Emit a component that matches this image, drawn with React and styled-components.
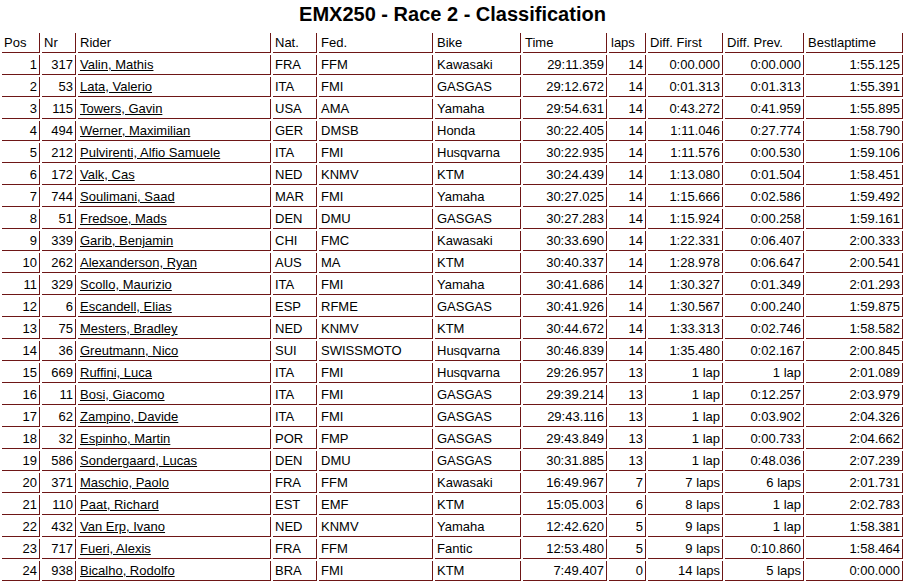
import React from 'react';
import styled, {createGlobalStyle} from 'styled-components';

const GlobalStyle = createGlobalStyle `
  body {
    margin: 0;
    background: #fff;
    font-family: "Liberation Sans", Arial, sans-serif;
    color: #000;
    overflow: hidden;
  }
`;

const Page = styled.div `
  width: 905px;
`;

const Title = styled.h1 `
  margin: 0;
  height: 31px;
  line-height: 29px;
  font-size: 20px;
  font-weight: bold;
  text-align: center;
`;

const Table = styled.table `
  width: 905px;
  table-layout: fixed;
  border-collapse: separate;
  border-spacing: 2px;
  font-size: 13px;
`;

const HeadCell = styled.th `
  height: 19px;
  padding: 0 2px;
  font-weight: normal;
  text-align: left;
  white-space: nowrap;
  border-right: 1px solid #6e1616;
  border-bottom: 1px solid #6e1616;
`;

const Cell = styled.td `
  height: 19px;
  padding: 0 2px;
  text-align: ${props => props.$right ? 'right' : 'left'};
  white-space: nowrap;
  overflow: hidden;
  border-right: 1px solid #6e1616;
  border-bottom: 1px solid #6e1616;
`;

const RiderLink = styled.a `
  color: #000;
  text-decoration: underline;
`;

const columns = [
  {label: 'Pos', width: 38, right: true},
  {label: 'Nr', width: 34, right: true},
  {label: 'Rider', width: 193},
  {label: 'Nat.', width: 44},
  {label: 'Fed.', width: 114},
  {label: 'Bike', width: 86},
  {label: 'Time', width: 84, right: true},
  {label: 'laps', width: 37, right: true},
  {label: 'Diff. First', width: 75, right: true},
  {label: 'Diff. Prev.', width: 79, right: true},
  {label: 'Bestlaptime', width: 97, right: true}
];

const rows = [
  ['1', '317', 'Valin, Mathis', 'FRA', 'FFM', 'Kawasaki', '29:11.359', '14', '0:00.000', '0:00.000', '1:55.125'],
  ['2', '53', 'Lata, Valerio', 'ITA', 'FMI', 'GASGAS', '29:12.672', '14', '0:01.313', '0:01.313', '1:55.391'],
  ['3', '115', 'Towers, Gavin', 'USA', 'AMA', 'Yamaha', '29:54.631', '14', '0:43.272', '0:41.959', '1:55.895'],
  ['4', '494', 'Werner, Maximilian', 'GER', 'DMSB', 'Honda', '30:22.405', '14', '1:11.046', '0:27.774', '1:58.790'],
  ['5', '212', 'Pulvirenti, Alfio Samuele', 'ITA', 'FMI', 'Husqvarna', '30:22.935', '14', '1:11.576', '0:00.530', '1:59.106'],
  ['6', '172', 'Valk, Cas', 'NED', 'KNMV', 'KTM', '30:24.439', '14', '1:13.080', '0:01.504', '1:58.451'],
  ['7', '744', 'Soulimani, Saad', 'MAR', 'FMI', 'Yamaha', '30:27.025', '14', '1:15.666', '0:02.586', '1:59.492'],
  ['8', '51', 'Fredsoe, Mads', 'DEN', 'DMU', 'GASGAS', '30:27.283', '14', '1:15.924', '0:00.258', '1:59.161'],
  ['9', '339', 'Garib, Benjamin', 'CHI', 'FMC', 'Kawasaki', '30:33.690', '14', '1:22.331', '0:06.407', '2:00.333'],
  ['10', '262', 'Alexanderson, Ryan', 'AUS', 'MA', 'KTM', '30:40.337', '14', '1:28.978', '0:06.647', '2:00.541'],
  ['11', '329', 'Scollo, Maurizio', 'ITA', 'FMI', 'Yamaha', '30:41.686', '14', '1:30.327', '0:01.349', '2:01.293'],
  ['12', '6', 'Escandell, Elias', 'ESP', 'RFME', 'GASGAS', '30:41.926', '14', '1:30.567', '0:00.240', '1:59.875'],
  ['13', '75', 'Mesters, Bradley', 'NED', 'KNMV', 'KTM', '30:44.672', '14', '1:33.313', '0:02.746', '1:58.582'],
  ['14', '36', 'Greutmann, Nico', 'SUI', 'SWISSMOTO', 'Husqvarna', '30:46.839', '14', '1:35.480', '0:02.167', '2:00.845'],
  ['15', '669', 'Ruffini, Luca', 'ITA', 'FMI', 'Husqvarna', '29:26.957', '13', '1 lap', '1 lap', '2:01.089'],
  ['16', '11', 'Bosi, Giacomo', 'ITA', 'FMI', 'GASGAS', '29:39.214', '13', '1 lap', '0:12.257', '2:03.979'],
  ['17', '62', 'Zampino, Davide', 'ITA', 'FMI', 'GASGAS', '29:43.116', '13', '1 lap', '0:03.902', '2:04.326'],
  ['18', '32', 'Espinho, Martin', 'POR', 'FMP', 'GASGAS', '29:43.849', '13', '1 lap', '0:00.733', '2:04.662'],
  ['19', '586', 'Sondergaard, Lucas', 'DEN', 'DMU', 'GASGAS', '30:31.885', '13', '1 lap', '0:48.036', '2:07.239'],
  ['20', '371', 'Maschio, Paolo', 'FRA', 'FFM', 'Kawasaki', '16:49.967', '7', '7 laps', '6 laps', '2:01.731'],
  ['21', '110', 'Paat, Richard', 'EST', 'EMF', 'KTM', '15:05.003', '6', '8 laps', '1 lap', '2:02.783'],
  ['22', '432', 'Van Erp, Ivano', 'NED', 'KNMV', 'Yamaha', '12:42.620', '5', '9 laps', '1 lap', '1:58.381'],
  ['23', '717', 'Fueri, Alexis', 'FRA', 'FFM', 'Fantic', '12:53.480', '5', '9 laps', '0:10.860', '1:58.464'],
  ['24', '938', 'Bicalho, Rodolfo', 'BRA', 'FMI', 'KTM', '7:49.407', '0', '14 laps', '5 laps', '0:00.000']
];

const App = () => (
  <Page>
    <GlobalStyle/>
    <Title>EMX250 - Race 2 - Classification</Title>
    <Table>
      <colgroup>
        {columns.map(col => <col key={col.label} style={{width: col.width}}/>)}
      </colgroup>
      <thead>
        <tr>
          {columns.map(col => <HeadCell key={col.label}>{col.label}</HeadCell>)}
        </tr>
      </thead>
      <tbody>
        {
          rows.map(row => <tr key={row[0]}>
            {
              row.map((value, i) => <Cell key={i} $right={columns[i].right}>
                {i === 2 ? <RiderLink href="#">{value}</RiderLink> : value}
              </Cell>)
            }
          </tr>)
        }
      </tbody>
    </Table>
  </Page>
);

export default App;
